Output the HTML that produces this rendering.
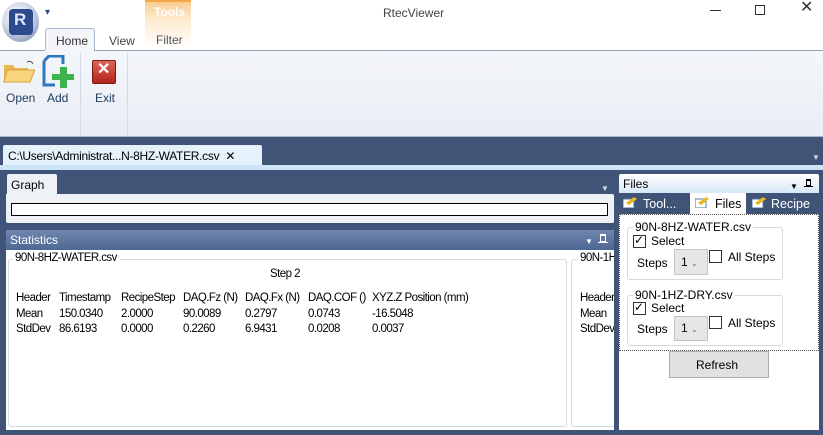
<!DOCTYPE html>
<html><head><style>
*{box-sizing:border-box;margin:0;padding:0}
body{width:823px;height:435px;overflow:hidden;background:#3f5477;font-family:"Liberation Sans",sans-serif;font-size:12px;color:#000;position:relative}
.a{position:absolute}
.t{position:absolute;white-space:nowrap;line-height:14px}
.s{font-size:11.5px;letter-spacing:-0.55px;line-height:15.5px}
</style></head><body>
<!-- title bar -->
<div class="a" style="left:0;top:0;width:823px;height:50px;background:#fff"></div>
<div class="a" style="left:2px;top:2px;width:37px;height:40px;border-radius:50%;background:radial-gradient(circle at 40% 35%,#fff 0,#cfd6e6 45%,#6a7fa8 100%)"></div>
<div class="a" style="left:9px;top:9px;width:24px;height:26px;border-radius:4px;background:#2c4a8c"></div>
<div class="t" style="left:14px;top:13px;color:#dfe8ff;font-weight:bold;font-size:17px">R</div>
<div class="t" style="left:45px;top:6px;font-size:10px;color:#2b4a8a">&#9662;</div>
<div class="a" style="left:145px;top:0;width:46px;height:48px;background:linear-gradient(#f8c98a,#fde9cf 40%,#fff)"></div>
<div class="a" style="left:145px;top:0;width:46px;height:2px;background:#f0a848"></div>
<div class="t" style="left:154px;top:5px;color:#fff;font-weight:bold;font-size:12px">Tools</div>
<div class="t" style="left:156px;top:33px;color:#555">Filter</div>
<div class="t" style="left:383px;top:6px;color:#444;font-size:12px">RtecViewer</div>
<div class="a" style="left:710px;top:10px;width:11px;height:1px;background:#333"></div>
<div class="a" style="left:755px;top:5px;width:10px;height:10px;border:1px solid #333"></div>
<div class="t" style="left:800px;top:1px;font-size:16px;color:#333">&#x2715;</div>
<div class="a" style="left:45px;top:28px;width:50px;height:23px;background:#f3f5f9;border:1px solid #a8b8d0;border-bottom:none;border-radius:3px 3px 0 0"></div>
<div class="t" style="left:56px;top:34px;color:#333">Home</div>
<div class="t" style="left:109px;top:34px;color:#444">View</div>
<!-- ribbon -->
<div class="a" style="left:0;top:50px;width:823px;height:87px;background:linear-gradient(#f4f6fa,#e9edf4);border-top:1px solid #8ea2c2;border-bottom:1px solid #a9b6ca"></div>
<div class="a" style="left:45px;top:50px;width:49px;height:1px;background:#f4f6fa"></div>
<div class="a" style="left:80px;top:53px;width:1px;height:83px;background:#d3dae6"></div>
<div class="a" style="left:127px;top:53px;width:1px;height:83px;background:#d3dae6"></div>
<svg class="a" style="left:3px;top:57px" width="32" height="28"><path d="M24 5 q4 -2 6 2" stroke="#555" fill="none"/><path d="M1 8h9l2 3h13v14H1z" fill="#e9b84f"/><path d="M4 13h28l-5 12H1z" fill="#f8d57e" stroke="#d8a23a"/></svg>
<svg class="a" style="left:40px;top:55px" width="34" height="34"><path d="M4 6 l5 -5 h14 v8 M4 6 v24 h11" stroke="#2f78c0" stroke-width="3" fill="none"/><path d="M20 12h7v7h7v6h-7v8h-7v-8h-8v-6h8z" fill="#3cb44a"/></svg>
<div class="a" style="left:92px;top:60px;width:24px;height:24px;background:linear-gradient(#e0665a,#b3221a);border:1px solid #7a1a12;border-radius:2px"></div>
<div class="t" style="left:97px;top:63px;color:#fff;font-size:16px;font-weight:bold">&#x2715;</div>
<div class="t" style="left:6px;top:91px;color:#1f3a5f">Open</div>
<div class="t" style="left:47px;top:91px;color:#1f3a5f">Add</div>
<div class="t" style="left:95px;top:91px;color:#1f3a5f">Exit</div>
<!-- doc tab -->
<div class="a" style="left:3px;top:145px;width:259px;height:22px;background:#e5f1fb;border-radius:2px 2px 0 0"></div>
<div class="t" style="left:8px;top:149px;font-size:12px;letter-spacing:-0.3px">C:\Users\Administrat...N-8HZ-WATER.csv &nbsp;&#x2715;</div>
<div class="a" style="left:0;top:165px;width:823px;height:5px;background:#cde3f6"></div>
<div class="t" style="left:812px;top:151px;color:#cfd8e6;font-size:8px">&#9660;</div>
<!-- graph -->
<div class="a" style="left:7px;top:174px;width:50px;height:22px;background:#eef1f6;border-radius:2px 2px 0 0"></div>
<div class="t" style="left:11px;top:178px">Graph</div>
<div class="t" style="left:601px;top:182px;color:#cfd8e6;font-size:8px">&#9660;</div>
<div class="a" style="left:6px;top:194px;width:608px;height:29px;background:#eef1f6;border-radius:0 2px 2px 2px"></div>
<div class="a" style="left:11px;top:203px;width:597px;height:13px;background:#fff;border:1px solid #000"></div>
<!-- statistics -->
<div class="a" style="left:6px;top:230px;width:608px;height:20px;background:linear-gradient(#6f86ad,#4e6894)"></div>
<div class="t" style="left:10px;top:233px;color:#fff">Statistics</div>
<div class="t" style="left:585px;top:235px;color:#fff;font-size:8px">&#9660;</div>
<div class="a" style="left:600px;top:234px;width:6px;height:8px;border:1px solid #fff;border-top:2px solid #fff"></div>
<div class="a" style="left:598px;top:242px;width:10px;height:1px;background:#fff"></div>
<div class="a" style="left:6px;top:250px;width:608px;height:180px;background:#fff"></div>
<div class="a" style="left:8px;top:259px;width:559px;height:168px;border:1px solid #d5dbe4;border-radius:3px"></div>
<div class="a" style="left:571px;top:259px;width:43px;height:168px;border:1px solid #d5dbe4;border-right:none;border-radius:3px 0 0 3px"></div>
<div class="t s" style="left:12px;top:251px;background:#fff;padding:0 3px">90N-8HZ-WATER.csv</div>
<div class="t s" style="left:578px;top:251px;background:#fff;padding-left:2px;width:36px;overflow:hidden">90N-1HZ</div>
<div class="t s" style="left:270px;top:267px">Step 2</div>
<div class="t s" style="left:16px;top:291px">Header<br>Mean<br>StdDev</div>
<div class="t s" style="left:59px;top:291px">Timestamp<br>150.0340<br>86.6193</div>
<div class="t s" style="left:121px;top:291px">RecipeStep<br>2.0000<br>0.0000</div>
<div class="t s" style="left:183px;top:291px">DAQ.Fz (N)<br>90.0089<br>0.2260</div>
<div class="t s" style="left:245px;top:291px">DAQ.Fx (N)<br>0.2797<br>6.9431</div>
<div class="t s" style="left:308px;top:291px">DAQ.COF ()<br>0.0743<br>0.0208</div>
<div class="t s" style="left:372px;top:291px">XYZ.Z Position (mm)<br>-16.5048<br>0.0037</div>
<div class="t s" style="left:580px;top:291px;width:34px;overflow:hidden">Header<br>Mean<br>StdDev</div>
<!-- files panel -->
<div class="a" style="left:619px;top:174px;width:200px;height:19px;background:linear-gradient(#fff,#d8e8f8);border-radius:2px 2px 0 0"></div>
<div class="t" style="left:623px;top:177px">Files</div>
<div class="t" style="left:790px;top:180px;font-size:8px">&#9660;</div>
<div class="a" style="left:806px;top:179px;width:5px;height:7px;border:1px solid #000;border-top:2px solid #000"></div>
<div class="a" style="left:804px;top:186px;width:9px;height:1px;background:#000"></div>
<div class="a" style="left:690px;top:193px;width:56px;height:22px;background:#fff"></div>
<svg class="a" style="left:623px;top:196px" width="14" height="12"><rect x="0" y="3" width="11" height="9" fill="#fff" stroke="#5577aa"/><path d="M3 7l8 -6 3 2 -8 6z" fill="#e8b820"/></svg>
<svg class="a" style="left:695px;top:196px" width="14" height="12"><rect x="0" y="3" width="11" height="9" fill="#fff" stroke="#5577aa"/><path d="M3 7l8 -6 3 2 -8 6z" fill="#e8b820"/></svg>
<svg class="a" style="left:752px;top:196px" width="14" height="12"><rect x="0" y="3" width="11" height="9" fill="#fff" stroke="#5577aa"/><path d="M3 7l8 -6 3 2 -8 6z" fill="#e8b820"/></svg>
<div class="t" style="left:643px;top:197px;color:#fff;font-size:12.5px">Tool...</div>
<div class="t" style="left:715px;top:197px;font-size:12.5px">Files</div>
<div class="t" style="left:771px;top:197px;color:#fff;font-size:12.5px">Recipe</div>
<div class="a" style="left:619px;top:214px;width:200px;height:216px;background:#fff"></div>
<div class="a" style="left:619px;top:214px;width:200px;height:137px;border:1px dotted #555"></div>
<div class="a" style="left:627px;top:227px;width:156px;height:53px;border:1px solid #d5dbe4;border-radius:3px"></div>
<div class="a" style="left:627px;top:295px;width:156px;height:51px;border:1px solid #d5dbe4;border-radius:3px"></div>
<div class="t" style="left:633px;top:220px;background:#fff;padding:0 2px">90N-8HZ-WATER.csv</div>
<div class="t" style="left:633px;top:288px;background:#fff;padding:0 2px">90N-1HZ-DRY.csv</div>
<div class="a" style="left:633px;top:235px;width:13px;height:13px;border:1px solid #333;background:#fff"></div>
<div class="t" style="left:634px;top:233px;font-size:12px">&#10003;</div>
<div class="t" style="left:651px;top:234px">Select</div>
<div class="a" style="left:633px;top:302px;width:13px;height:13px;border:1px solid #333;background:#fff"></div>
<div class="t" style="left:634px;top:300px;font-size:12px">&#10003;</div>
<div class="t" style="left:651px;top:301px">Select</div>
<div class="t" style="left:637px;top:256px">Steps</div>
<div class="t" style="left:637px;top:322px">Steps</div>
<div class="a" style="left:674px;top:249px;width:34px;height:26px;background:#e6e6e6;border:1px solid #c4c4c4"></div>
<div class="a" style="left:674px;top:316px;width:34px;height:25px;background:#e6e6e6;border:1px solid #c4c4c4"></div>
<div class="t" style="left:681px;top:255px">1 <span style="font-size:8px;color:#666">&#8964;</span></div>
<div class="t" style="left:681px;top:321px">1 <span style="font-size:8px;color:#666">&#8964;</span></div>
<div class="a" style="left:709px;top:250px;width:13px;height:13px;border:1px solid #333"></div>
<div class="a" style="left:709px;top:316px;width:13px;height:13px;border:1px solid #333"></div>
<div class="t" style="left:728px;top:250px">All Steps</div>
<div class="t" style="left:728px;top:316px">All Steps</div>
<div class="a" style="left:669px;top:351px;width:100px;height:27px;background:#e1e1e1;border:1px solid #adadad"></div>
<div class="t" style="left:696px;top:358px">Refresh</div>
</body></html>
